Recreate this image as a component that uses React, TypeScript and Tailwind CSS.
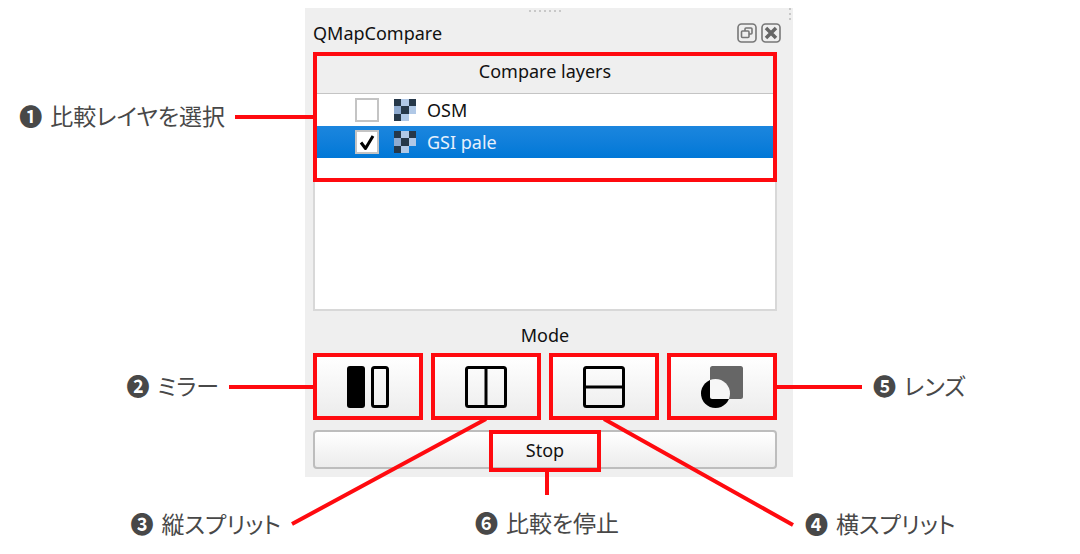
import { useState } from "react";

const modes = [
  { id: "mirror", label: "Mirror", icon: MirrorIcon },
  { id: "vertical", label: "Vertical split", icon: VerticalSplitIcon },
  { id: "horizontal", label: "Horizontal split", icon: HorizontalSplitIcon },
  { id: "lens", label: "Lens", icon: LensIcon },
];

function MirrorIcon() {
  return (
    <svg className="size-11" viewBox="0 0 44 44" aria-hidden="true">
      <rect x="1" y="1" width="18" height="42" rx="3" fill="#000" />
      <rect x="26.5" y="2.5" width="15" height="39" rx="2" fill="none" stroke="#000" strokeWidth="3" />
    </svg>
  );
}

function VerticalSplitIcon() {
  return (
    <svg className="size-11" viewBox="0 0 44 44" aria-hidden="true">
      <rect x="2.5" y="2.5" width="39" height="39" rx="2" fill="none" stroke="#000" strokeWidth="3" />
      <path d="M22 2v40" stroke="#000" strokeWidth="3" />
    </svg>
  );
}

function HorizontalSplitIcon() {
  return (
    <svg className="size-11" viewBox="0 0 44 44" aria-hidden="true">
      <rect x="2.5" y="2.5" width="39" height="39" rx="2" fill="none" stroke="#000" strokeWidth="3" />
      <path d="M2 22h40" stroke="#000" strokeWidth="3" />
    </svg>
  );
}

function LensIcon() {
  return (
    <svg className="size-11" viewBox="0 0 44 44" aria-hidden="true">
      <clipPath id="lens-square">
        <rect x="10" y="1" width="33" height="33" rx="2.5" />
      </clipPath>
      <circle cx="15.5" cy="28.5" r="14.5" fill="#000" />
      <rect x="10" y="1" width="33" height="33" rx="2.5" fill="#666" />
      <circle cx="15.5" cy="28.5" r="14.5" fill="#f7f7f7" clipPath="url(#lens-square)" />
    </svg>
  );
}

function RasterIcon() {
  return (
    <svg className="size-6" viewBox="0 0 24 24" aria-hidden="true">
      <path d="M8 1h8v7H8zM16 8h7v8h-7zM8 16h8v7H8z" fill="#b0c8e6" />
      <path d="M1 8h7v8H1z" fill="#8fabd0" />
      <path d="M1 1h7v7H1zM16 1h7v7h-7zM8 8h8v8H8zM1 16h7v7H1z" fill="#263849" />
    </svg>
  );
}

function LayerRow({ name, defaultChecked = false }: { name: string; defaultChecked?: boolean }) {
  const [checked, setChecked] = useState(defaultChecked);

  return (
    <label
      className={
        checked
          ? "flex h-8 items-center bg-linear-to-b from-[#1b86de] to-[#0078d7] pl-10 text-[#e6f0fc]"
          : "flex h-8 items-center bg-white pl-10 text-[#111]"
      }
    >
      <span className="grid">
        <input
          type="checkbox"
          checked={checked}
          onChange={(e) => setChecked(e.target.checked)}
          className="peer col-start-1 row-start-1 size-6 appearance-none border-2 border-[#c4c4c4] bg-white"
        />
        <svg
          className="pointer-events-none invisible col-start-1 row-start-1 size-6 peer-checked:visible"
          viewBox="0 0 24 24"
          fill="none"
          aria-hidden="true"
        >
          <path d="M6 12.500l4.500 6L18 6" stroke="#000" strokeWidth="3" strokeLinejoin="round" />
        </svg>
      </span>
      <span className="ml-3.5">
        <RasterIcon />
      </span>
      <span className="ml-2.5">{name}</span>
    </label>
  );
}

function Callout({ mark, text }: { mark: string; text: string }) {
  return (
    <p className="flex h-7 items-center gap-2 whitespace-nowrap font-['Noto_Sans_CJK_JP',sans-serif] text-[23px] leading-7 text-[#484848] [font-feature-settings:'palt']">
      <span className="font-bold">{mark}</span>
      <span>{text}</span>
    </p>
  );
}

// Red leader lines from the callouts to the controls
function Leaders() {
  return (
    <svg
      className="pointer-events-none absolute inset-0 h-full w-full"
      viewBox="0 0 1080 554"
      preserveAspectRatio="none"
      aria-hidden="true"
    >
      <path
        d="M235 117H314M229 387H314M776 387H862M547 471V495M486 419L292 524M604 419L793 525"
        fill="none"
        stroke="#ff0a0f"
        strokeWidth="4"
      />
    </svg>
  );
}

function ComparePanel() {
  return (
    <section className="bg-[#efefef] pr-4 pb-2 pl-2 font-['Noto_Sans',sans-serif] text-[18px] leading-6 text-[#111]">
      {/* Dock title bar */}
      <div className="relative flex h-11 items-end justify-between pb-[7px]">
        <span className="absolute top-0.5 left-1/2 h-0.5 w-8 -translate-x-1/2 bg-[repeating-linear-gradient(90deg,#c8c8c8_0_2px,transparent_2px_5px)]" />
        <span className="absolute top-0 -right-3.5 h-3.5 w-0.5 bg-[repeating-linear-gradient(180deg,#c8c8c8_0_2px,transparent_2px_5px)]" />
        <h1>QMapCompare</h1>
        <div className="-mr-1 flex gap-1 pb-0.5">
          <button type="button" aria-label="Float" className="size-5">
            <svg viewBox="0 0 20 20" fill="none" stroke="#777" aria-hidden="true">
              <rect x="1" y="1" width="18" height="18" rx="3.500" strokeWidth="1.600" />
              <rect x="4.500" y="8" width="7.500" height="6.500" rx="1" strokeWidth="1.600" />
              <path d="M8 8V6q0-1 1-1h5q1 0 1 1v4q0 1-1 1h-2" strokeWidth="1.600" />
            </svg>
          </button>
          <button type="button" aria-label="Close" className="size-5">
            <svg viewBox="0 0 20 20" fill="none" stroke="#777" aria-hidden="true">
              <rect x="1" y="1" width="18" height="18" rx="3.500" strokeWidth="1.600" />
              <path d="M5 5l10 10M15 5L5 15" stroke="#666" strokeWidth="3.500" />
            </svg>
          </button>
        </div>
      </div>

      {/* Layer list */}
      <div className="relative">
        <div className="border-2 border-[#d8d8d8] bg-white">
          <h2 className="h-10 border-b border-[#c4c4c4] bg-[#efefef] pt-[5px] text-center">
            Compare layers
          </h2>
          <LayerRow name="OSM" />
          <LayerRow name="GSI pale" defaultChecked />
          <div className="h-[151px]" />
        </div>
        <span className="pointer-events-none absolute inset-x-0 top-0 h-[130px] border-4 border-[#ff0a0f]" />
      </div>

      {/* Mode buttons */}
      <h2 className="h-[42px] pt-3 text-center">Mode</h2>
      <div className="grid grid-cols-4 gap-2">
        {modes.map(({ id, label, icon: Icon }) => (
          <button
            key={id}
            type="button"
            aria-label={label}
            className="flex h-[67px] items-center justify-center border-4 border-[#ff0a0f] bg-linear-to-b from-white to-[#ececec]"
          >
            <Icon />
          </button>
        ))}
      </div>

      <button
        type="button"
        className="relative mt-2.5 block h-[39px] w-full rounded-sm border-2 border-[#bdbdbd] bg-linear-to-b from-white to-[#ececec]"
      >
        Stop
        <span className="pointer-events-none absolute inset-x-0 -top-0.5 mx-auto h-[42px] w-28 border-4 border-[#ff0a0f]" />
      </button>
    </section>
  );
}

export default function App() {
  return (
    <main className="bg-white">
      <div className="relative grid grid-cols-[305fr_488fr_287fr] pb-[17px]">
        <div className="flex flex-col items-end pt-[101px]">
          <div className="pr-20">
            <Callout mark="❶" text="比較レイヤを選択" />
          </div>
          <div className="mt-[242px] pr-[86px]">
            <Callout mark="❷" text="ミラー" />
          </div>
          <div className="mt-[110px] pr-6">
            <Callout mark="❸" text="縦スプリット" />
          </div>
        </div>

        <div className="pt-2">
          <ComparePanel />
          <div className="mt-[31px] flex justify-center pr-1">
            <Callout mark="❻" text="比較を停止" />
          </div>
        </div>

        <div className="flex flex-col items-start pt-[371px]">
          <div className="pl-20">
            <Callout mark="❺" text="レンズ" />
          </div>
          <div className="mt-[110px] pl-3">
            <Callout mark="❹" text="横スプリット" />
          </div>
        </div>

        <Leaders />
      </div>
    </main>
  );
}
